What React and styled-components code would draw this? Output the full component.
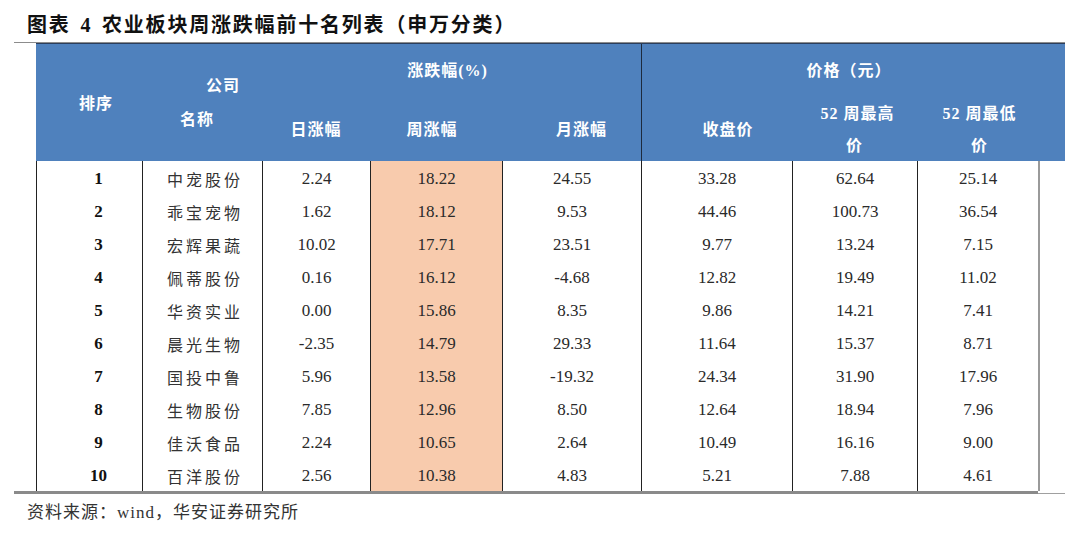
import React from "react";
import styled, { createGlobalStyle } from "styled-components";

const Global = createGlobalStyle`
  html, body { margin: 0; padding: 0; background: #fff; }
  body { font-family: "Liberation Serif", "Noto Sans CJK SC", serif; }
`;

const SERIF = `"Liberation Serif", "Noto Sans CJK SC", serif`;

const Page = styled.div`
  width: 1080px;
  height: 533px;
  padding-left: 14px;
  box-sizing: border-box;
  overflow: hidden;
`;

const Frame = styled.div`
  width: 1051px;
`;

const Title = styled.div`
  height: 43px;
  box-sizing: border-box;
  padding: 13px 0 0 13px;
  font-family: ${SERIF};
  font-weight: 700;
  font-size: 20px;
  line-height: 24px;
  letter-spacing: 1.8px;
  word-spacing: 3px;
  color: #111;
  border-bottom: 1.5px solid #8c8c8c;
`;

const TableWrap = styled.div`
  margin-left: 22px;
`;

const COLS = "106px 120px 108px 132px 139px 151px 125px 125px";
const BODY_COLS = "106px 120px 108px 132px 139px 151px 125px 121px";

const Header = styled.div`
  display: grid;
  grid-template-columns: ${COLS};
  grid-template-rows: 52px 65px;
  background: #4f81bd;
  border-top: 1px solid #2b3e5c;
  color: #fff;
  font-family: ${SERIF};
  font-weight: 700;
  font-size: 16px;
  letter-spacing: 1px;
`;

const HCell = styled.div`
  grid-column: ${(p) => p.$col};
  grid-row: ${(p) => p.$row};
  display: flex;
  flex-direction: column;
  justify-content: center;
  align-items: center;
  text-align: center;
  line-height: ${(p) => p.$lh || 20}px;
  padding-left: ${(p) => p.$pl || 0}px;
  padding-top: ${(p) => p.$pt || 0}px;
  box-sizing: border-box;
  border-left: ${(p) => (p.$line ? "1px solid #1d2a3d" : "none")};
`;

const Line = styled.span`
  display: block;
  position: relative;
  left: ${(p) => p.$dx || 0}px;
  white-space: pre;
`;

const Body = styled.div`
  display: flex;
  flex-direction: column;
`;

const Row = styled.div`
  display: grid;
  grid-template-columns: ${BODY_COLS};
  height: 33px;
  border-right: 2px solid #9a9a9a;
  width: 1004px;
  box-sizing: border-box;
`;

const Cell = styled.div`
  display: flex;
  align-items: center;
  justify-content: center;
  padding-top: 2px;
  box-sizing: border-box;
  border-left: 1px solid #222;
  background: ${(p) => (p.$hot ? "#f8cbad" : "transparent")};
  font-family: ${SERIF};
  font-size: 17px;
  color: #2a2a2a;
  font-weight: ${(p) => (p.$bold ? 700 : 400)};
  ${(p) => (p.$bold ? "color: #111; padding-left: 18px;" : "")}
  ${(p) => (p.$name ? "font-size: 16px; letter-spacing: 3px; padding-left: 5px; color: #333;" : "")}
`;

const Rule = styled.div`
  display: flex;
  align-items: flex-end;
  height: 3px;
`;

const Thick = styled.div`
  width: 1024px;
  height: 3px;
  background: #8a8a8a;
`;

const Thin = styled.div`
  width: 27px;
  height: 1.5px;
  background: #a0a0a0;
`;

const Footer = styled.div`
  margin-top: 7px;
  padding-left: 13px;
  font-family: ${SERIF};
  font-size: 17px;
  line-height: 24px;
  letter-spacing: 1px;
  color: #333;
`;

const data = [
  ["1", "中宠股份", "2.24", "18.22", "24.55", "33.28", "62.64", "25.14"],
  ["2", "乖宝宠物", "1.62", "18.12", "9.53", "44.46", "100.73", "36.54"],
  ["3", "宏辉果蔬", "10.02", "17.71", "23.51", "9.77", "13.24", "7.15"],
  ["4", "佩蒂股份", "0.16", "16.12", "-4.68", "12.82", "19.49", "11.02"],
  ["5", "华资实业", "0.00", "15.86", "8.35", "9.86", "14.21", "7.41"],
  ["6", "晨光生物", "-2.35", "14.79", "29.33", "11.64", "15.37", "8.71"],
  ["7", "国投中鲁", "5.96", "13.58", "-19.32", "24.34", "31.90", "17.96"],
  ["8", "生物股份", "7.85", "12.96", "8.50", "12.64", "18.94", "7.96"],
  ["9", "佳沃食品", "2.24", "10.65", "2.64", "10.49", "16.16", "9.00"],
  ["10", "百洋股份", "2.56", "10.38", "4.83", "5.21", "7.88", "4.61"],
];

export default function App() {
  return (
    <>
      <Global />
      <Page>
        <Frame>
          <Title>图表 4 农业板块周涨跌幅前十名列表（申万分类）</Title>
          <TableWrap>
            <Header>
              <HCell $col="1" $row="1 / 3" $pl={14} $pt={3}>
                <Line>排序</Line>
              </HCell>
              <HCell $col="2" $row="1 / 3" $lh={34} $pt={1}>
                <Line $dx={21}>公司</Line>
                <Line $dx={-5}>名称</Line>
              </HCell>
              <HCell $col="3 / 6" $row="1" $pt={2}>
                <Line $dx={-4}>涨跌幅(%)</Line>
              </HCell>
              <HCell $col="3" $row="2" $pt={2}>
                <Line>日涨幅</Line>
              </HCell>
              <HCell $col="4" $row="2" $pt={2}>
                <Line $dx={-4}>周涨幅</Line>
              </HCell>
              <HCell $col="5" $row="2" $pt={2}>
                <Line $dx={10}>月涨幅</Line>
              </HCell>
              <HCell $col="6 / 9" $row="1" $line $pt={2}>
                <Line $dx={7}>价格（元）</Line>
              </HCell>
              <HCell $col="6" $row="2" $line $pt={2}>
                <Line $dx={11}>收盘价</Line>
              </HCell>
              <HCell $col="7" $row="2" $lh={32} $pt={2}>
                <Line $dx={3}>52 周最高</Line>
                <Line>价</Line>
              </HCell>
              <HCell $col="8" $row="2" $lh={32} $pt={2}>
                <Line>52 周最低</Line>
                <Line>价</Line>
              </HCell>
            </Header>
            <Body>
              {data.map((r) => (
                <Row key={r[0]}>
                  <Cell $bold>{r[0]}</Cell>
                  <Cell $name>{r[1]}</Cell>
                  <Cell>{r[2]}</Cell>
                  <Cell $hot>{r[3]}</Cell>
                  <Cell>{r[4]}</Cell>
                  <Cell>{r[5]}</Cell>
                  <Cell>{r[6]}</Cell>
                  <Cell>{r[7]}</Cell>
                </Row>
              ))}
            </Body>
          </TableWrap>
          <Rule>
            <Thick />
            <Thin />
          </Rule>
          <Footer>资料来源：wind，华安证券研究所</Footer>
        </Frame>
      </Page>
    </>
  );
}
